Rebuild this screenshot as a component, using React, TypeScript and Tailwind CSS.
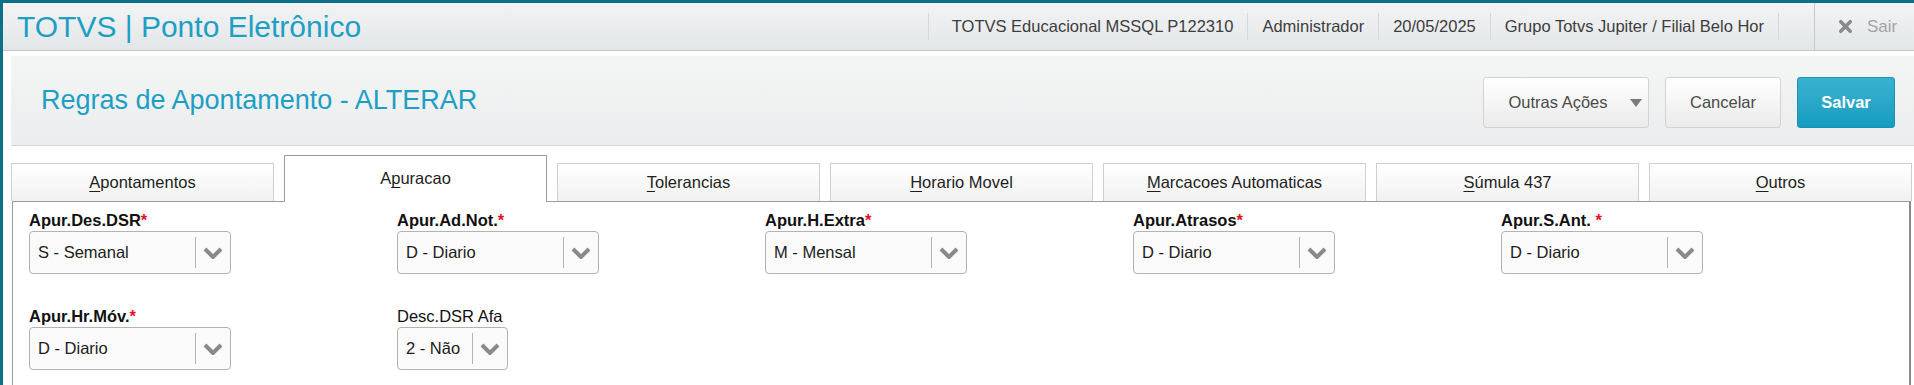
import { X } from 'lucide-react';

const tabs = [
  { pre: '', key: 'A', rest: 'pontamentos' },
  { pre: 'A', key: 'p', rest: 'uracao', active: true },
  { pre: '', key: 'T', rest: 'olerancias' },
  { pre: '', key: 'H', rest: 'orario Movel' },
  { pre: '', key: 'M', rest: 'arcacoes Automaticas' },
  { pre: '', key: 'S', rest: 'úmula 437' },
  { pre: '', key: 'O', rest: 'utros' },
];

const row1 = [
  { label: 'Apur.Des.DSR', req: '*', value: 'S - Semanal' },
  { label: 'Apur.Ad.Not.', req: '*', value: 'D - Diario' },
  { label: 'Apur.H.Extra', req: '*', value: 'M - Mensal' },
  { label: 'Apur.Atrasos', req: '*', value: 'D - Diario' },
  { label: 'Apur.S.Ant.', req: ' *', value: 'D - Diario' },
];

function Chevron() {
  return (
    <svg width="20" height="12" viewBox="0 0 20 12" fill="none">
      <polyline points="2,2 10,10 18,2" stroke="#8a8a8a" strokeWidth="4" strokeLinejoin="miter" />
    </svg>
  );
}

function SelectBox({ value, small }: { value: string; small?: boolean }) {
  return (
    <div
      className={
        'mt-[2px] flex h-[43px] items-stretch rounded-[4px] border border-[#b3b3b3] bg-[#fafafa] ' +
        (small ? 'w-[111px]' : 'w-[202px]')
      }
    >
      <div className="flex flex-1 items-center pl-[8px] text-[16.5px] text-[#1c1c1c]">{value}</div>
      <div className="my-[5px] w-px bg-[#b3b3b3]" />
      <div className="flex w-[34px] items-center justify-center">
        <Chevron />
      </div>
    </div>
  );
}

function Field({ label, req, value, bold = true, small }: { label: string; req?: string; value: string; bold?: boolean; small?: boolean }) {
  return (
    <div className="w-[368px]">
      <div className={'text-[16.5px] leading-[18px] text-[#111] ' + (bold ? 'font-bold' : '')}>
        {label}
        {req ? <span className="whitespace-pre font-bold text-[#e8121e]">{req}</span> : null}
      </div>
      <SelectBox value={value} small={small} />
    </div>
  );
}

export default function App() {
  return (
    <div className="h-[385px] w-[1914px] overflow-hidden border-l-[3px] border-[#0f6f89] bg-white font-['Liberation_Sans',Arial,sans-serif]">
      <header className="flex h-[51px] items-stretch justify-between border-t-[3px] border-b border-t-[#0f6f89] border-b-[#c6cacd] bg-gradient-to-b from-[#f2f3f4] to-[#e3e6e8]">
        <div className="flex items-center pl-[14px] text-[30px] leading-none text-[#1d9fc4]">TOTVS | Ponto Eletrônico</div>
        <div className="flex items-center">
          {['TOTVS Educacional MSSQL P122310', 'Administrador', '20/05/2025', 'Grupo Totvs Jupiter / Filial Belo Hor'].map((t, i, a) => (
            <div
              key={t}
              className={
                'flex h-[27px] items-center border-l border-[#d6d9db] text-[16.5px] text-[#3d3d3d] ' +
                (i === 0 ? 'pl-[23px] pr-[14px] ' : 'px-[14px] ') +
                (i === a.length - 1 ? 'border-r' : '')
              }
            >
              {t}
            </div>
          ))}
          <div className="ml-[35px] flex h-full w-[100px] items-center gap-[12px] border-l border-[#c4c8cb] pl-[21px] text-[17px] text-[#a3a3a3]">
            <X className="h-[19px] w-[19px] text-[#8a8a8a]" strokeWidth={4.5} />
            <span>Sair</span>
          </div>
        </div>
      </header>

      <div className="ml-[8px] mt-[5px] flex h-[90px] items-center justify-between border-b border-[#d6d8da] bg-gradient-to-b from-[#f4f5f5] to-[#ebedee] pl-[30px] pr-[19px]">
        <div className="text-[27px] text-[#1d9fc4]">Regras de Apontamento - ALTERAR</div>
        <div className="flex items-center gap-[16px] pt-[3px]">
          <button className="relative h-[51px] w-[166px] rounded-[3px] border border-[#d3d3d3] bg-gradient-to-b from-white to-[#ebebeb] pr-[16px] text-[16.5px] text-[#4a4a4a]">
            Outras Ações
            <span className="absolute right-[6px] top-[21px] h-0 w-0 border-x-[6px] border-t-[8px] border-x-transparent border-t-[#7a7a7a]" />
          </button>
          <button className="h-[51px] w-[116px] rounded-[3px] border border-[#d3d3d3] bg-gradient-to-b from-white to-[#ebebeb] text-[16.5px] text-[#4a4a4a]">
            Cancelar
          </button>
          <button className="h-[51px] w-[98px] rounded-[3px] border border-[#1a90b1] bg-gradient-to-b from-[#3ab1cf] to-[#149dc1] text-[16.5px] font-bold text-white">
            Salvar
          </button>
        </div>
      </div>

      <div className="relative z-10 ml-[8px] mt-[9px] flex h-[47px] w-[1901px] items-end gap-[10px]">
        {tabs.map(t => (
          <div
            key={t.key + t.rest}
            className={
              'flex w-[263px] items-center justify-center border-x border-t text-[16.5px] text-[#1e1e1e] ' +
              (t.active
                ? 'h-[47px] border-[#9b9b9b] bg-white pb-[1px]'
                : 'mb-px h-[38px] border-[#cfcfcf] bg-gradient-to-b from-white to-[#f1f1f1]')
            }
          >
            <span>
              {t.pre}
              <span className="underline underline-offset-[3px]">{t.key}</span>
              {t.rest}
            </span>
          </div>
        ))}
      </div>

      <div className="-mt-px ml-[9px] h-[200px] w-[1899px] border-l border-t border-r-2 border-l-[#9b9b9b] border-t-[#9b9b9b] border-r-[#8a8a8a] pl-[16px] pt-[9px]">
        <div className="flex">
          {row1.map(f => (
            <Field key={f.label} label={f.label} req={f.req} value={f.value} />
          ))}
        </div>
        <div className="mt-[33px] flex">
          <Field label="Apur.Hr.Móv." req="*" value="D - Diario" />
          <Field label="Desc.DSR Afa" value="2 - Não" bold={false} small />
        </div>
      </div>
    </div>
  );
}
